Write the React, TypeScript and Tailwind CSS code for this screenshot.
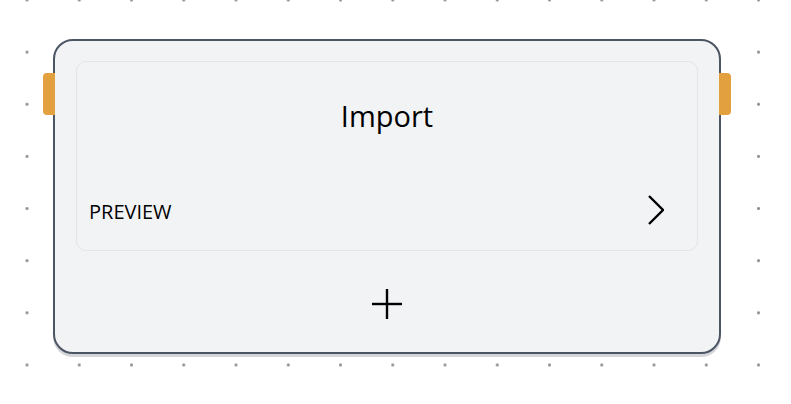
import { ReactNode } from 'react'

function Handle({ side }: { side: 'left' | 'right' }) {
  return (
    <div
      className={`absolute top-[32px] w-[12px] h-[42px] bg-[#e2a03f] ${side === 'left' ? 'left-[-12px] rounded-l-[4px]' : 'right-[-12px] rounded-r-[4px]'}`}
    />
  )
}

function NodeCard({ children }: { children: ReactNode }) {
  return (
    <div className="relative w-[668px] h-[315px] rounded-[20px] border-2 border-[#4b5563] bg-[#f2f3f5] shadow-[0_3px_0_#d4d5d8] px-[21px] pt-[20px]">
      <Handle side="left" />
      <Handle side="right" />
      {children}
    </div>
  )
}

export default function App() {
  return (
    <div
      className="w-[791px] h-[404px] bg-white pl-[53px] pt-[39px] bg-[radial-gradient(circle,#8e8e96_1.2px,transparent_1.7px)] bg-[size:52.25px_52.15px] bg-[position:0.9px_-26.1px]"
      style={{ fontFamily: '"Open Sans", "Noto Sans", sans-serif' }}
    >
      <NodeCard>
        {/* Inner panel */}
        <div className="h-[190px] rounded-[10px] border border-[#e3e5e8] flex flex-col">
          <div className="h-[107px] flex items-center justify-center text-[29px] text-black">Import</div>
          <div className="flex-1 flex items-center justify-between pl-[12px] pr-[33px]">
            <span className="text-[20px] text-black pt-[4px]">PREVIEW</span>
            <svg width="16" height="30" viewBox="0 0 16 30" fill="none" stroke="black" strokeWidth="2.4">
              <polyline points="1,1 15,15 1,29" />
            </svg>
          </div>
        </div>
        <div className="flex justify-center pt-[38px]">
          <svg width="30" height="30" viewBox="0 0 30 30" stroke="black" strokeWidth="2.4">
            <line x1="15" y1="0" x2="15" y2="30" />
            <line x1="0" y1="15" x2="30" y2="15" />
          </svg>
        </div>
      </NodeCard>
    </div>
  )
}
